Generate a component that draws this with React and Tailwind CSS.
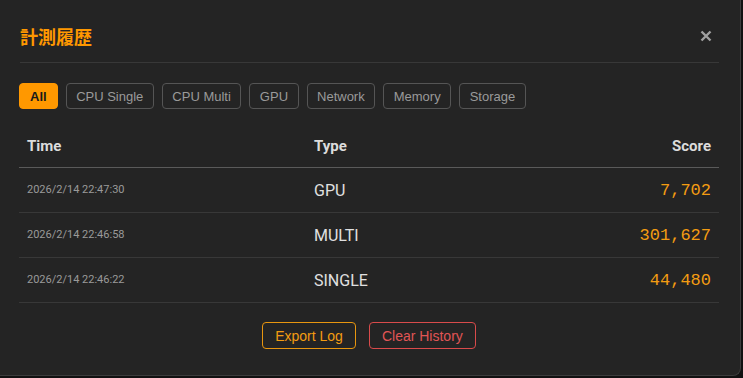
import React from "react";

const filters = ["All", "CPU Single", "CPU Multi", "GPU", "Network", "Memory", "Storage"];
const rows = [
  { time: "2026/2/14 22:47:30", type: "GPU", score: "7,702" },
  { time: "2026/2/14 22:46:58", type: "MULTI", score: "301,627" },
  { time: "2026/2/14 22:46:22", type: "SINGLE", score: "44,480" },
];

const arial = { fontFamily: "'Liberation Sans', Arial, sans-serif" };

export default function App() {
  return (
    <div className="w-[743px] h-[378px] bg-[#111] overflow-hidden" style={{ fontFamily: "Roboto, 'Noto Sans CJK JP', sans-serif" }}>
      <div className="w-[741px] h-[376px] bg-[#242424] rounded-br-[8px] border-b border-r border-[#3c3c3c] pl-[19px] pr-[21px] pt-[23px]">
        <div className="flex items-center justify-between h-[28px] mb-[11px] pl-[1px]">
          <h2 className="text-[18px] font-bold text-[#ff9800] leading-none -mt-[3px]" style={{ fontFamily: "'Noto Sans CJK JP', sans-serif" }}>計測履歴</h2>
          <svg width="12" height="12" viewBox="0 0 12 12" className="mr-[7px] -mt-[2px]">
            <path d="M1.5 1.5 L10.5 10.5 M10.5 1.5 L1.5 10.5" stroke="#a0a0a0" strokeWidth="2.4" strokeLinecap="butt" />
          </svg>
        </div>
        <div className="border-t border-[#383838] ml-[1px]" />
        <div className="flex gap-[8px] mt-[20px]" style={arial}>
          {filters.map((f, i) => (
            <button
              key={f}
              className={
                i === 0
                  ? "h-[26px] px-[10px] rounded-[4px] bg-[#ff9800] border border-[#ff9800] text-[#1a1a1a] text-[13px] font-bold leading-none"
                  : "h-[26px] px-[9.5px] rounded-[4px] border border-[#555] text-[#9a9a9a] text-[13px] leading-none"
              }
            >
              {f}
            </button>
          ))}
        </div>
        <div className="mt-[15px]">
          <div className="grid grid-cols-[287px_1fr_auto] h-[44px] items-center border-b border-[#5a5a5a] px-[8px] pt-[2px] text-[15px] font-bold text-[#dcdcdc]">
            <div>Time</div>
            <div>Type</div>
            <div className="text-right">Score</div>
          </div>
          {rows.map((r) => (
            <div key={r.time} className="grid grid-cols-[287px_1fr_auto] h-[45px] items-center border-b border-[#383838] px-[8px] pt-[1px]">
              <div className="text-[11px] text-[#9a9a9a]">{r.time}</div>
              <div className="text-[16px] text-[#e0e0e0]">{r.type}</div>
              <div className="text-right text-[17px] text-[#f39c12]" style={{ fontFamily: "'Liberation Mono', monospace" }}>{r.score}</div>
            </div>
          ))}
        </div>
        <div className="flex justify-center gap-[13px] mt-[19px] pl-[0px]" style={arial}>
          <button className="h-[27px] px-[12px] rounded-[4px] border border-[#e8960f] text-[#f39c12] text-[14px] leading-none">Export Log</button>
          <button className="h-[27px] px-[12px] rounded-[4px] border border-[#d94b4b] text-[#e05555] text-[14px] leading-none">Clear History</button>
        </div>
      </div>
    </div>
  );
}
